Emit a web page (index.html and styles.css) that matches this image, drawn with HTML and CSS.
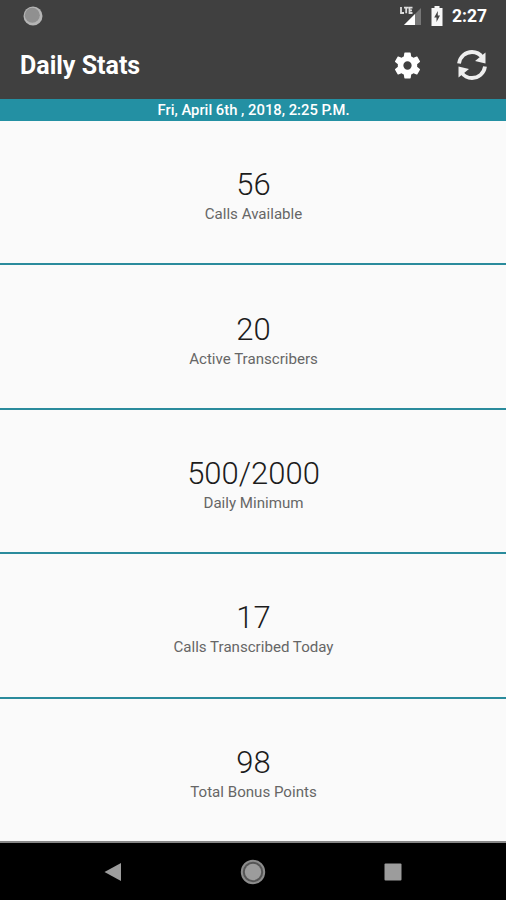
FILE: index.html
```html
<!DOCTYPE html>
<html lang="en">
<head>
<meta charset="utf-8">
<title>Daily Stats</title>
<link rel="stylesheet" href="styles.css">
</head>
<body>
<div class="screen">
  <header class="top">
    <div class="status">
      <svg class="notice" width="20" height="20" viewBox="0 0 20 20"><circle cx="10" cy="10" r="9.5" fill="#b5b5b5"/><circle cx="9.3" cy="9.3" r="7.500" fill="#909090"/></svg>
      <div class="status-right">
        <svg class="signal" width="24" height="22" viewBox="0 0 24 22"><path d="M5 20 22 3V20Z" fill="#777"/><path d="M5 20 16 9V20Z" fill="#fff"/><path d="M2 2v6h3M5 2.700h4.500M7.200 2.700v5.500M13.500 2.700h-3v5.300h3M10.500 5.300h2.500" fill="none" stroke="#ddd" stroke-width="1.800"/></svg>
        <svg class="battery" width="12" height="20" viewBox="0 0 12 20"><path d="M3.500 0h5v2H11.500v18H.5V2h3Z" fill="#f7f7f7"/><path d="M6.800 5 3.200 11.500h2.300V16L9 9.500H6.800Z" fill="#444"/></svg>
        <span class="clock">2:27</span>
      </div>
    </div>
    <div class="bar">
      <h1>Daily Stats</h1>
      <div class="actions">
        <svg width="31" height="31" viewBox="0 0 24 24" fill="#fff"><path d="M19.430 12.980c.04-.32.07-.64.07-.98s-.03-.66-.07-.98l2.110-1.650c.19-.15.24-.42.12-.64l-2-3.460c-.12-.22-.39-.3-.61-.22l-2.490 1c-.52-.4-1.080-.73-1.690-.98l-.38-2.650C14.460 2.180 14.250 2 14 2h-4c-.25 0-.46.18-.49.42l-.38 2.650c-.61.25-1.170.59-1.690.98l-2.490-1c-.23-.09-.49 0-.61.22l-2 3.460c-.13.22-.07.49.12.64l2.110 1.650c-.04.32-.07.65-.07.98s.03.66.07.98l-2.110 1.650c-.19.15-.24.42-.12.64l2 3.460c.12.22.39.3.61.22l2.490-1c.52.4 1.080.73 1.690.98l.38 2.650c.03.24.24.42.49.42h4c.25 0 .46-.18.49-.42l.38-2.650c.61-.25 1.170-.59 1.690-.98l2.490 1c.23.09.49 0 .61-.22l2-3.460c.12-.22.07-.49-.12-.64ZM12 15.200A3.200 3.200 0 1 1 12 8.800a3.200 3.200 0 0 1 0 6.400Z"/></svg>
        <svg width="32" height="32" viewBox="0 0 32 32"><g fill="none" stroke="#eee" stroke-width="3.800"><path d="M3 14.500C4 7.500 9.500 3 16 3c4.500 0 8 2 10.500 5.500"/><path d="M29 17.500C28 24.500 22.500 29 16 29c-4.500 0-8-2-10.500-5.500"/></g><path d="M29.500 3.500v11L19 12ZM2.500 28.500v-11L13 20Z" fill="#eee"/></svg>
      </div>
    </div>
  </header>
  <div class="date">Fri, April 6th , 2018, 2:25 P.M.</div>
  <main class="stats">
    <section class="stat"><div class="value">56</div><div class="label">Calls Available</div></section>
    <section class="stat"><div class="value">20</div><div class="label">Active Transcribers</div></section>
    <section class="stat"><div class="value">500/2000</div><div class="label">Daily Minimum</div></section>
    <section class="stat"><div class="value">17</div><div class="label">Calls Transcribed Today</div></section>
    <section class="stat"><div class="value">98</div><div class="label">Total Bonus Points</div></section>
  </main>
  <nav class="nav">
    <svg width="18" height="20" viewBox="0 0 18 20"><path d="M.5 10 17 1V19Z" fill="#9c9c9c"/></svg>
    <svg width="26" height="26" viewBox="0 0 26 26"><circle cx="13" cy="13" r="11.200" fill="#555" stroke="#8c8c8c" stroke-width="2"/><circle cx="13" cy="13" r="8.200" fill="#9c9c9c"/></svg>
    <svg width="18" height="18" viewBox="0 0 18 18"><rect x=".5" y=".5" width="17" height="17" rx="1" fill="#9c9c9c"/></svg>
  </nav>
</div>
</body>
</html>
```
FILE: styles.css
```css
body {
  margin: 0;
  font-family: Roboto, sans-serif;
}
.screen {
  width: 506px;
  height: 900px;
  display: flex;
  flex-direction: column;
  background: #fafafa;
  overflow: hidden;
}
.top {
  height: 99px;
  background: #404040;
  color: #fff;
}
.status {
  height: 32px;
  display: flex;
  align-items: center;
  justify-content: space-between;
  padding: 0 19px 0 23px;
}
.status-right {
  display: flex;
  align-items: center;
}
.battery {
  margin: 0 9px 0 8px;
}
.clock {
  font-size: 17.5px;
  font-weight: 700;
  line-height: 32px;
}
.bar {
  height: 66px;
  display: flex;
  align-items: center;
  justify-content: space-between;
  padding: 0 18px 0 20px;
}
h1 {
  margin: 0;
  padding-top: 2px;
  font-size: 25px;
  line-height: 30px;
  font-weight: 700;
}
.actions {
  display: flex;
  align-items: center;
  gap: 33px;
}
svg {
  display: block;
}
.date {
  height: 22px;
  line-height: 22px;
  background: #2390a3;
  color: #fff;
  text-align: center;
  font-size: 14.8px;
  font-weight: 500;
  padding-left: 1px;
}
.stats {
  height: 722px;
  display: grid;
  grid-template-rows: repeat(5, 1fr);
}
.stat {
  display: flex;
  flex-direction: column;
  align-items: center;
  justify-content: center;
  padding-top: 9px;
  border-bottom: 2px solid #2a8b9c;
  box-sizing: border-box;
}
.stat:last-child {
  border-bottom-color: #888;
}
.value {
  font-size: 31px;
  line-height: 36px;
  padding-left: 1px;
  font-weight: 300;
  color: #1c1c1c;
}
.label {
  font-size: 15.1px;
  line-height: 23px;
  padding-left: 1px;
  color: #666;
}
.nav {
  height: 57px;
  background: #000;
  display: flex;
  align-items: center;
  justify-content: space-between;
  padding: 0 104px 0 104px;
}
```
